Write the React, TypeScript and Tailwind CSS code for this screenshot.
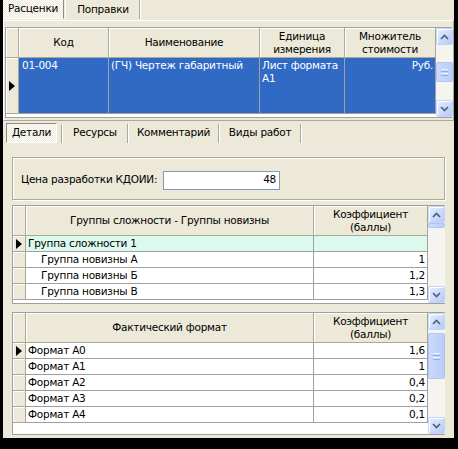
import React from "react";

const dither = "bg-[repeating-conic-gradient(#ffffff_0_25%,#ECE9D8_0_50%)] bg-[length:2px_2px]";

function Chevron({ up }: { up?: boolean }) {
  return (
    <svg width="9" height="6" viewBox="0 0 9 6" className={up ? "" : "rotate-180"}>
      <path d="M1 5 L4.5 1.5 L8 5" fill="none" stroke="#4D6185" strokeWidth="1.7" />
    </svg>
  );
}

function ScrollBtn({ up }: { up?: boolean }) {
  return (
    <div className="h-[17px] w-[17px] shrink-0 rounded-[2px] border border-[#C3D3FD] bg-gradient-to-br from-[#E6EEFF] to-[#B6CAF5] flex items-center justify-center shadow-[inset_1px_1px_0_#fff]">
      <Chevron up={up} />
    </div>
  );
}

function Thumb({ className }: { className: string }) {
  return (
    <div className={`w-[17px] rounded-[2px] border border-[#B2C6F3] bg-gradient-to-r from-[#CBDAFC] to-[#BACDF7] flex flex-col items-center justify-center gap-[1px] ${className}`}>
      <div className="h-[1px] w-[7px] bg-[#EEF4FE]" />
      <div className="h-[1px] w-[7px] bg-[#8CB0F8]" />
      <div className="h-[1px] w-[7px] bg-[#EEF4FE]" />
      <div className="h-[1px] w-[7px] bg-[#8CB0F8]" />
    </div>
  );
}

function ScrollBar({ children }: { children?: React.ReactNode }) {
  return (
    <div className="w-[17px] shrink-0 flex flex-col bg-[#F5F4EF]">
      <ScrollBtn up />
      <div className="flex-1 flex flex-col">{children}</div>
      <ScrollBtn />
    </div>
  );
}

function HCell({ w, children }: { w: string; children?: React.ReactNode }) {
  return (
    <div className={`${w} shrink-0 flex items-center justify-center text-center border-r border-b border-[#ACA899] shadow-[inset_1px_1px_0_#fff] leading-[13px]`}>
      {children}
    </div>
  );
}

function Ind({ mark, h }: { mark?: boolean; h: string }) {
  return (
    <div className={`${h} w-[13px] shrink-0 bg-[#ECE9D8] border-r border-b border-[#ACA899] shadow-[inset_1px_1px_0_#fff] flex items-center justify-center`}>
      {mark && (
        <svg width="6" height="10" viewBox="0 0 6 10">
          <path d="M0 0 L6 5 L0 10 Z" fill="#000" />
        </svg>
      )}
    </div>
  );
}

function Tab({ label, active, w }: { label: string; active?: boolean; w: string }) {
  return (
    <div
      className={`${w} h-[20px] flex items-center justify-center ${
        active ? `border-t border-l border-[#8E8C80] border-r-white border-b-white border-r border-b ${dither}` : ""
      }`}
    >
      {label}
    </div>
  );
}

function Sep() {
  return <div className="h-[19px] w-[2px] border-l border-[#ACA899] border-r border-r-white" />;
}

const group = [
  { name: "Группа сложности 1", val: "", top: true },
  { name: "Группа новизны А", val: "1" },
  { name: "Группа новизны Б", val: "1,2" },
  { name: "Группа новизны В", val: "1,3" },
];

const formats = [
  ["Формат А0", "1,6"],
  ["Формат А1", "1"],
  ["Формат А2", "0,4"],
  ["Формат А3", "0,2"],
  ["Формат А4", "0,1"],
];

export default function App() {
  return (
    <div className="w-[458px] h-[449px] bg-black pl-[3px] font-['DejaVu_Sans',sans-serif] text-[10.5px] tracking-[-0.25px] text-black">
      <div className="w-[451px] h-[438px] bg-[#ECE9D8] flex flex-col">
        {/* top tabs */}
        <div className="h-[20px] flex items-start">
          <div className={`w-[61px] h-[19px] flex items-center justify-center border-r border-b border-[#8E8C80] border-b-white ${dither}`}>
            Расценки
          </div>
          <div className="w-[2px] h-[19px] ml-[1px] border-l border-white" />
          <div className="w-[72px] h-[19px] flex items-center justify-center">Поправки</div>
          <Sep />
        </div>

        {/* panel 1 */}
        <div className="h-[101px] border border-white border-r-[#ACA899] border-b-[#ACA899] pl-[1px] pt-[6px]">
          <div className="w-[447px] h-[91px] border border-[#A0A0A0] bg-white flex">
            <div className="flex-1 flex flex-col">
              <div className="h-[30px] flex bg-[#ECE9D8]">
                <Ind h="h-[30px]" />
                <HCell w="w-[90px]">Код</HCell>
                <HCell w="w-[151px]">Наименование</HCell>
                <HCell w="w-[85px]">
                  Единица
                  <br />
                  измерения
                </HCell>
                <HCell w="w-[91px]">
                  Множитель
                  <br />
                  стоимости
                </HCell>
              </div>
              <div className="h-[56px] flex">
                <Ind h="h-[56px]" mark />
                <div className="flex flex-1 bg-[#316AC5] text-white border-b border-[#A0A0A0]">
                  <div className="w-[90px] shrink-0 border-r border-[#A0A0A0] px-[3px] pt-[1px] leading-[13px]">01-004</div>
                  <div className="w-[151px] shrink-0 border-r border-[#A0A0A0] px-[2px] pt-[1px] leading-[13px] whitespace-nowrap overflow-hidden">
                    (ГЧ) Чертеж габаритный
                  </div>
                  <div className="w-[85px] shrink-0 border-r border-[#A0A0A0] px-[2px] pt-[1px] leading-[13px]">
                    Лист формата А1
                  </div>
                  <div className="w-[91px] shrink-0 border-r border-[#A0A0A0] px-[2px] pt-[1px] leading-[13px] text-right">
                    Руб.
                  </div>
                </div>
              </div>
            </div>
            <ScrollBar>
              <Thumb className="mt-[17px] h-[20px]" />
            </ScrollBar>
          </div>
        </div>

        {/* second tabs */}
        <div className="h-[23px] flex items-center pl-[3px] pt-[1px]">
          <Tab label="Детали" active w="w-[51px]" />
          <div className="w-[4px]" />
          <Sep />
          <Tab label="Ресурсы" w="w-[64px]" />
          <Sep />
          <Tab label="Комментарий" w="w-[89px]" />
          <Sep />
          <Tab label="Виды работ" w="w-[80px]" />
          <Sep />
        </div>

        {/* panel 2 */}
        <div className="flex-1 flex flex-col px-[9px] pt-[13px]">
          <div className="h-[43px] border border-[#ACA899] shadow-[1px_1px_0_#fff,inset_1px_1px_0_#fff] flex items-center pl-[8px] pt-[3px]">
            <span className="w-[142px] whitespace-nowrap">Цена разработки КДОИИ:</span>
            <div className="w-[117px] h-[19px] bg-white border border-[#7F9DB9] flex items-center justify-end pr-[3px]">48</div>
          </div>

          {/* grid 2 */}
          <div className="mt-[5px] h-[99px] border border-[#A0A0A0] bg-white flex">
            <div className="flex-1 flex flex-col">
              <div className="h-[30px] flex bg-[#ECE9D8]">
                <Ind h="h-[30px]" />
                <HCell w="w-[288px]">Группы сложности - Группы новизны</HCell>
                <HCell w="w-[114px]">
                  Коэффициент
                  <br />
                  (баллы)
                </HCell>
              </div>
              {group.map((r, i) => (
                <div key={i} className="h-[16px] flex">
                  <Ind h="h-[16px]" mark={i === 0} />
                  <div className={`flex flex-1 border-b border-[#A0A0A0] ${r.top ? "bg-[#DCF9EE]" : ""}`}>
                    <div className={`w-[288px] shrink-0 border-r border-[#A0A0A0] leading-[15px] ${r.top ? "pl-[2px]" : "pl-[15px]"}`}>
                      {r.name}
                    </div>
                    <div className="w-[114px] shrink-0 border-r border-[#A0A0A0] leading-[15px] text-right pr-[2px]">{r.val}</div>
                  </div>
                </div>
              ))}
            </div>
            <ScrollBar>
              <Thumb className="h-[5px] rounded-t-none" />
            </ScrollBar>
          </div>

          {/* grid 3 */}
          <div className="mt-[8px] h-[123px] border border-[#A0A0A0] bg-white flex">
            <div className="flex-1 flex flex-col">
              <div className="h-[30px] flex bg-[#ECE9D8]">
                <Ind h="h-[30px]" />
                <HCell w="w-[288px]">Фактический формат</HCell>
                <HCell w="w-[114px]">
                  Коэффициент
                  <br />
                  (баллы)
                </HCell>
              </div>
              {formats.map(([n, v], i) => (
                <div key={i} className="h-[16px] flex">
                  <Ind h="h-[16px]" mark={i === 0} />
                  <div className="flex flex-1 border-b border-[#A0A0A0]">
                    <div className="w-[288px] shrink-0 border-r border-[#A0A0A0] leading-[15px] pl-[2px]">{n}</div>
                    <div className="w-[114px] shrink-0 border-r border-[#A0A0A0] leading-[15px] text-right pr-[2px]">{v}</div>
                  </div>
                </div>
              ))}
            </div>
            <ScrollBar>
              <Thumb className="mt-[3px] h-[46px]" />
            </ScrollBar>
          </div>
        </div>
      </div>
    </div>
  );
}
